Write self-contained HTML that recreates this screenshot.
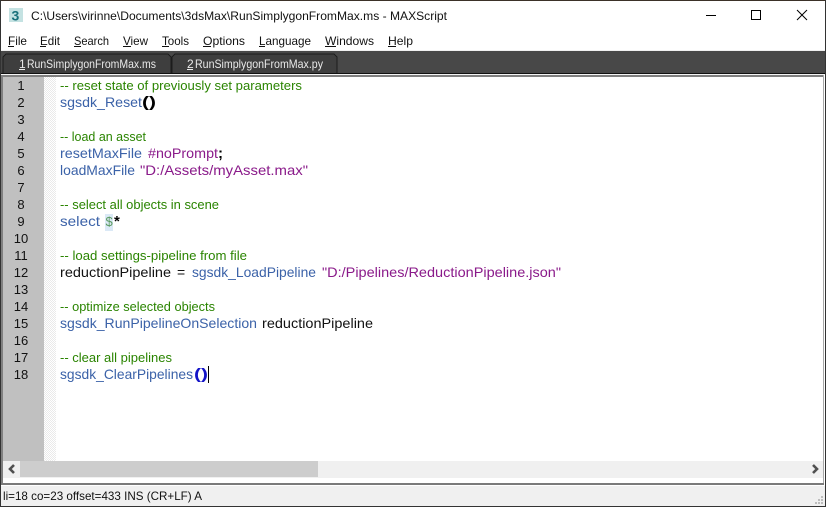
<!DOCTYPE html>
<html><head><meta charset="utf-8"><style>
html,body{margin:0;padding:0;background:#fff;overflow:hidden}
svg{display:block}
text{font-family:"Liberation Sans",sans-serif;white-space:pre}
.m{font-size:12px;fill:#111}
.t{font-size:12px;fill:#e9e9e9}
.n{font-size:13px;fill:#111;text-anchor:middle}
.c{font-size:12.5px;fill:#2a8400}
.f{font-size:14px;fill:#3b62a8}
.p{font-size:14px;fill:#111}
.s{font-size:14px;fill:#8a1a8a}
.b{font-size:15px;font-weight:bold;fill:#000}
</style></head><body>
<svg width="826" height="507" viewBox="0 0 826 507" xmlns="http://www.w3.org/2000/svg" shape-rendering="crispEdges">
<defs><pattern id="chk" width="2" height="2" patternUnits="userSpaceOnUse"><rect width="2" height="2" fill="#fff"/><rect width="1" height="1" fill="#eaeaea"/><rect x="1" y="1" width="1" height="1" fill="#eaeaea"/></pattern></defs>
<rect width="826" height="507" fill="#fff"/>
<!-- menu / tab bar -->
<rect x="1" y="50" width="824" height="1" fill="#f0f0f0"/>
<rect x="1" y="51" width="824" height="22" fill="#484848"/>
<rect x="1" y="73" width="824" height="1" fill="#111"/>
<path d="M3 73V57l3-3H168l3 3V73" fill="#3e3e3e" stroke="#1c1c1c"/>
<path d="M172 73V57l3-3H334l3 3V73" fill="#3e3e3e" stroke="#1c1c1c"/>
<!-- editor frame -->
<rect x="1" y="74" width="824" height="1" fill="#f4f4f4"/>
<rect x="1" y="75" width="823" height="2" fill="#808080"/>
<rect x="1" y="75" width="2" height="410" fill="#808080"/>
<rect x="823" y="75" width="1" height="410" fill="#a8a8a8"/>
<rect x="3" y="77" width="41" height="384" fill="#c0c0c0"/>
<rect x="44" y="77" width="12" height="384" fill="url(#chk)"/>
<!-- scrollbar -->
<rect x="3" y="461" width="820" height="17" fill="#f0f0f0"/>
<rect x="20" y="461" width="298" height="16" fill="#cdcdcd"/>
<path d="M14 465l-4 4 4 4M813 465l4 4-4 4" fill="none" stroke="#505050" stroke-width="2.6" shape-rendering="auto"/>
<rect x="1" y="483" width="823" height="2" fill="#7a7a7a"/>
<!-- status -->
<rect x="1" y="486" width="824" height="20" fill="#f0f0f0"/>
<g fill="#bdbdbd"><rect x="821" y="496" width="2" height="2"/><rect x="818" y="499" width="2" height="2"/><rect x="821" y="499" width="2" height="2"/><rect x="815" y="502" width="2" height="2"/><rect x="818" y="502" width="2" height="2"/><rect x="821" y="502" width="2" height="2"/></g>
<!-- window border -->
<rect width="826" height="1" fill="#3b3128"/>
<rect y="0" width="1" height="507" fill="#333"/>
<rect x="825" y="0" width="1" height="507" fill="#333"/>
<rect y="506" width="826" height="1" fill="#333"/>
<!-- title -->
<rect x="9" y="8" width="14" height="14" fill="#c4e2e2"/>
<text x="11.5" y="20.5" style="font-size:14px;font-weight:bold;fill:#17707a">3</text>
<text x="31" y="20" class="m" textLength="416" lengthAdjust="spacingAndGlyphs">C:\Users\virinne\Documents\3dsMax\RunSimplygonFromMax.ms - MAXScript</text>
<rect x="706" y="15" width="10" height="1" fill="#000"/>
<rect x="751.5" y="10.5" width="9" height="9" fill="none" stroke="#000"/>
<path d="M797 10l10 10M807 10l-10 10" stroke="#000" fill="none" shape-rendering="auto"/>
<!-- menu -->
<text x="8" y="45" class="m" textLength="19" lengthAdjust="spacingAndGlyphs">File</text>
<text x="40" y="45" class="m" textLength="20" lengthAdjust="spacingAndGlyphs">Edit</text>
<text x="74" y="45" class="m" textLength="35" lengthAdjust="spacingAndGlyphs">Search</text>
<text x="123" y="45" class="m" textLength="25" lengthAdjust="spacingAndGlyphs">View</text>
<text x="162" y="45" class="m" textLength="27" lengthAdjust="spacingAndGlyphs">Tools</text>
<text x="203" y="45" class="m" textLength="42" lengthAdjust="spacingAndGlyphs">Options</text>
<text x="259" y="45" class="m" textLength="52" lengthAdjust="spacingAndGlyphs">Language</text>
<text x="325" y="45" class="m" textLength="49" lengthAdjust="spacingAndGlyphs">Windows</text>
<text x="388" y="45" class="m" textLength="25" lengthAdjust="spacingAndGlyphs">Help</text>
<g fill="#111"><rect x="8" y="46" width="6" height="1"/><rect x="40" y="46" width="6" height="1"/><rect x="74" y="46" width="7" height="1"/><rect x="123" y="46" width="8" height="1"/><rect x="162" y="46" width="7" height="1"/><rect x="203" y="46" width="8" height="1"/><rect x="259" y="46" width="6" height="1"/><rect x="325" y="46" width="11" height="1"/><rect x="388" y="46" width="8" height="1"/></g>
<!-- tabs -->
<text x="19" y="68" class="t">1</text><rect x="19" y="69" width="6" height="1" fill="#e9e9e9"/>
<text x="27" y="68" class="t" textLength="129" lengthAdjust="spacingAndGlyphs">RunSimplygonFromMax.ms</text>
<text x="187" y="68" class="t">2</text><rect x="187" y="69" width="6" height="1" fill="#e9e9e9"/>
<text x="195" y="68" class="t" textLength="128" lengthAdjust="spacingAndGlyphs">RunSimplygonFromMax.py</text>
<!-- line numbers -->
<text x="21" y="90" class="n">1</text><text x="21" y="107" class="n">2</text><text x="21" y="124" class="n">3</text><text x="21" y="141" class="n">4</text><text x="21" y="158" class="n">5</text><text x="21" y="175" class="n">6</text><text x="21" y="192" class="n">7</text><text x="21" y="209" class="n">8</text><text x="21" y="226" class="n">9</text><text x="21" y="243" class="n">10</text><text x="21" y="260" class="n">11</text><text x="21" y="277" class="n">12</text><text x="21" y="294" class="n">13</text><text x="21" y="311" class="n">14</text><text x="21" y="328" class="n">15</text><text x="21" y="345" class="n">16</text><text x="21" y="362" class="n">17</text><text x="21" y="379" class="n">18</text>
<!-- code -->
<text x="60" y="90" class="c" textLength="242" lengthAdjust="spacingAndGlyphs">-- reset state of previously set parameters</text>
<text x="60" y="107" class="f" textLength="82" lengthAdjust="spacingAndGlyphs">sgsdk_Reset</text><text x="142" y="107" class="b" textLength="14" lengthAdjust="spacingAndGlyphs">()</text>
<text x="60" y="141" class="c" textLength="86" lengthAdjust="spacingAndGlyphs">-- load an asset</text>
<text x="60" y="158" class="f" textLength="82" lengthAdjust="spacingAndGlyphs">resetMaxFile</text><text x="148" y="158" class="s" textLength="70" lengthAdjust="spacingAndGlyphs">#noPrompt</text><text x="218" y="158" class="b">;</text>
<text x="60" y="175" class="f" textLength="75" lengthAdjust="spacingAndGlyphs">loadMaxFile</text><text x="140" y="175" class="s" textLength="168" lengthAdjust="spacingAndGlyphs">"D:/Assets/myAsset.max"</text>
<text x="60" y="209" class="c" textLength="159" lengthAdjust="spacingAndGlyphs">-- select all objects in scene</text>
<text x="60" y="226" class="f" textLength="40" lengthAdjust="spacingAndGlyphs">select</text>
<rect x="105" y="214" width="8" height="17" fill="#dbe9f6"/>
<text x="105.5" y="226" style="font-size:13px;fill:#5a9a60">$</text><text x="114" y="226" class="b">*</text>
<text x="60" y="260" class="c" textLength="187" lengthAdjust="spacingAndGlyphs">-- load settings-pipeline from file</text>
<text x="60" y="277" class="p" textLength="111" lengthAdjust="spacingAndGlyphs">reductionPipeline</text><text x="177" y="277" class="p">=</text><text x="192" y="277" class="f" textLength="124" lengthAdjust="spacingAndGlyphs">sgsdk_LoadPipeline</text><text x="322" y="277" class="s" textLength="239" lengthAdjust="spacingAndGlyphs">"D:/Pipelines/ReductionPipeline.json"</text>
<text x="60" y="311" class="c" textLength="155" lengthAdjust="spacingAndGlyphs">-- optimize selected objects</text>
<text x="60" y="328" class="f" textLength="197" lengthAdjust="spacingAndGlyphs">sgsdk_RunPipelineOnSelection</text><text x="262" y="328" class="p" textLength="111" lengthAdjust="spacingAndGlyphs">reductionPipeline</text>
<text x="60" y="362" class="c" textLength="112" lengthAdjust="spacingAndGlyphs">-- clear all pipelines</text>
<text x="60" y="379" class="f" textLength="133" lengthAdjust="spacingAndGlyphs">sgsdk_ClearPipelines</text><text x="194" y="379" class="b" style="fill:#1414c8" textLength="14" lengthAdjust="spacingAndGlyphs">()</text>
<rect x="208" y="366" width="1" height="17" fill="#000"/>
<!-- status text -->
<text x="3" y="500" class="m" textLength="199" lengthAdjust="spacingAndGlyphs">li=18 co=23 offset=433 INS (CR+LF) A</text>
</svg>
</body></html>
